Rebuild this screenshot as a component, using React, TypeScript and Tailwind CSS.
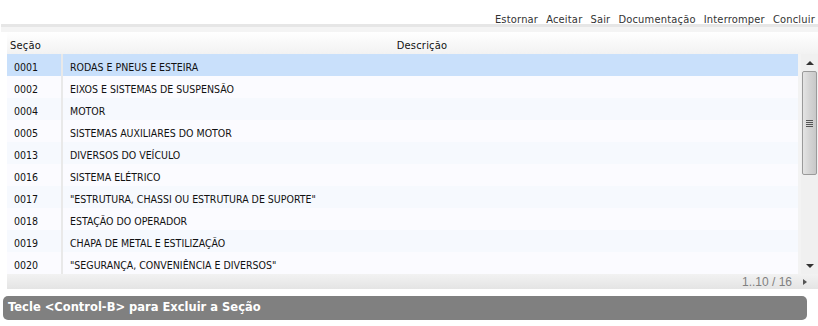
const ROWS = [
  ["0001", "RODAS E PNEUS E ESTEIRA"],
  ["0002", "EIXOS E SISTEMAS DE SUSPENSÃO"],
  ["0004", "MOTOR"],
  ["0005", "SISTEMAS AUXILIARES DO MOTOR"],
  ["0013", "DIVERSOS DO VEÍCULO"],
  ["0016", "SISTEMA ELÉTRICO"],
  ["0017", "\"ESTRUTURA, CHASSI OU ESTRUTURA DE SUPORTE\""],
  ["0018", "ESTAÇÃO DO OPERADOR"],
  ["0019", "CHAPA DE METAL E ESTILIZAÇÃO"],
  ["0020", "\"SEGURANÇA, CONVENIÊNCIA E DIVERSOS\""],
];

const ACTIONS = ["Estornar", "Aceitar", "Sair", "Documentação", "Interromper", "Concluir"];

export default function App() {
  return (
    <div className="w-[818px] h-[326px] bg-white overflow-hidden font-['DejaVu_Sans_Condensed',sans-serif] text-[11px] text-[#111]">
      {/* toolbar */}
      <div className="h-[24px] flex justify-end items-end gap-[8px] pr-[3px] leading-[8px] tracking-[0.2px] text-[#333]">
        {ACTIONS.map((a) => (
          <span key={a}>{a}</span>
        ))}
      </div>
      <div className="ml-[1px] h-[3px] bg-[#e6e6e6]" />
      <div className="ml-[1px] h-[5px] bg-[#f4f4f4]" />

      {/* grid */}
      <div className="pl-[7px]">
        <div className="h-[22px] flex items-center pt-[6px] bg-gradient-to-b from-white to-[#f2f2f2] tracking-[0.2px]">
          <div className="w-[55px] pl-[3px]">Seção</div>
          <div className="flex-1 text-center pr-[36px]">Descrição</div>
        </div>
        <div className="flex">
          <div className="flex-1 text-[10.5px]">
            {ROWS.map(([code, desc], i) => (
              <div
                key={code}
                className={`h-[22px] flex ${
                  i === 0 ? "bg-[#c9e0fb]" : i % 2 === 1 ? "bg-[#fbfbff]" : "bg-[#f6f9fe]"
                }`}
              >
                <div className="w-[54px] pl-[7px] pt-[6px] flex items-center">{code}</div>
                <div className="w-[2px] bg-[#e9e9e9]" />
                <div className="pl-[7px] pt-[6px] flex items-center">{desc}</div>
              </div>
            ))}
          </div>
          <div className="w-[3px] bg-[#f3f3f3]" />
          {/* scrollbar */}
          <div className="w-[17px] h-[220px] bg-[#f0f0f0] flex flex-col items-center">
            <div className="h-[17px] w-full flex items-center justify-center">
              <div className="w-0 h-0 border-x-[4px] border-x-transparent border-b-[4px] border-b-[#333]" />
            </div>
            <div className="w-[15px] h-[104px] rounded-[2px] border border-[#9a9a9a] bg-gradient-to-r from-[#e4e4e4] via-[#d4d4d4] to-[#c8c8c8] flex flex-col items-center justify-center gap-[1px]">
              <div className="w-[7px] h-[1px] bg-[#555]" />
              <div className="w-[7px] h-[1px] bg-[#555]" />
              <div className="w-[7px] h-[1px] bg-[#555]" />
              <div className="w-[7px] h-[1px] bg-[#555]" />
            </div>
            <div className="flex-1" />
            <div className="h-[16px] w-full flex items-center justify-center">
              <div className="w-0 h-0 border-x-[4px] border-x-transparent border-t-[4px] border-t-[#333]" />
            </div>
          </div>
        </div>
        <div className="h-[15px] flex items-center justify-end gap-[11px] pr-[11px] bg-gradient-to-b from-[#f2f2f2] to-[#e4e4e4] font-['Liberation_Sans',sans-serif] text-[12px] text-[#808080]">
          <span>1..10 / 16</span>
          <div className="w-0 h-0 border-y-[3px] border-y-transparent border-l-[4px] border-l-[#555]" />
        </div>
      </div>

      {/* status */}
      <div className="mt-[7px] ml-[3px] w-[804px] h-[24px] rounded-[5px] bg-[#808080] flex items-center pl-[5px] text-white font-bold font-['DejaVu_Sans',sans-serif] text-[11.5px]">
        Tecle &lt;Control-B&gt; para Excluir a Seção
      </div>
    </div>
  );
}
